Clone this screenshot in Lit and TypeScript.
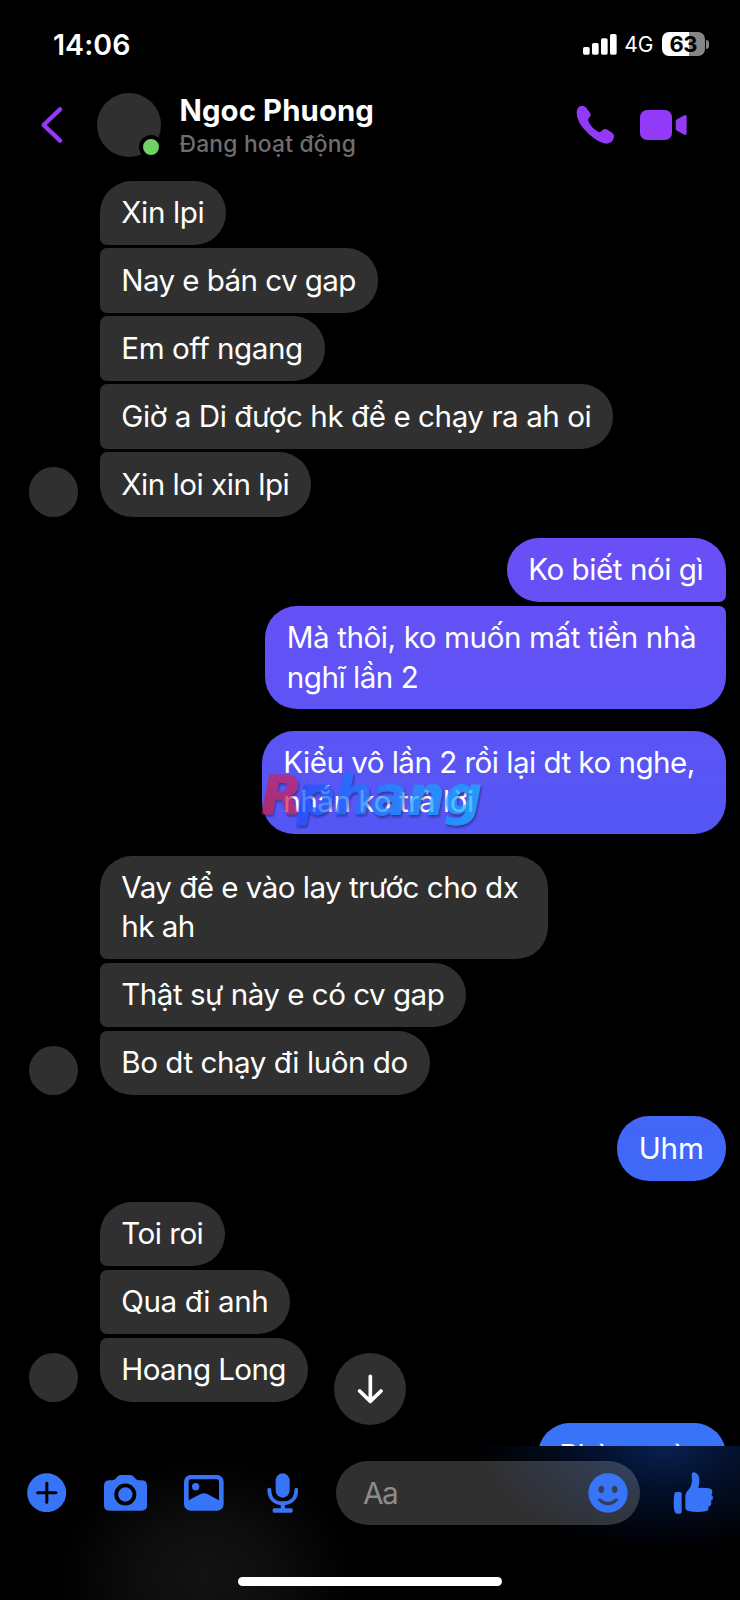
import { LitElement, html, css, svg } from "lit";
import { customElement, property } from "lit/decorators.js";
import { classMap } from "lit/directives/class-map.js";

/** A line of text and the width it is set to. */
type Line = [text: string, width: number];

interface Message {
  lines: Line[];
  width: number;
  joinTop?: boolean;
  joinBottom?: boolean;
}

interface Group {
  mine: boolean;
  messages: Message[];
}

const GROUPS: Group[] = [
  {
    mine: false,
    messages: [
      { lines: [["Xin lpi", 83]], width: 126, joinBottom: true },
      { lines: [["Nay e bán cv gap", 234.5]], width: 278, joinTop: true, joinBottom: true },
      { lines: [["Em off ngang", 181.5]], width: 225, joinTop: true, joinBottom: true },
      { lines: [["Giờ a Di được hk để e chạy ra ah oi", 470]], width: 513, joinTop: true, joinBottom: true },
      { lines: [["Xin loi xin lpi", 168]], width: 211, joinTop: true },
    ],
  },
  {
    mine: true,
    messages: [
      { lines: [["Ko biết nói gì", 175]], width: 219, joinBottom: true },
      { lines: [["Mà thôi, ko muốn mất tiền nhà", 409.5], ["nghĩ lần 2", 131.5]], width: 460.5, joinTop: true },
    ],
  },
  {
    mine: true,
    messages: [{ lines: [["Kiểu vô lần 2 rồi lại dt ko nghe,", 411.5], ["nhắn ko trả lời", 190.5]], width: 464 }],
  },
  {
    mine: false,
    messages: [
      { lines: [["Vay để e vào lay trước cho dx", 397], ["hk ah", 73.5]], width: 448, joinBottom: true },
      { lines: [["Thật sự này e có cv gap", 323]], width: 366, joinTop: true, joinBottom: true },
      { lines: [["Bo dt chạy đi luôn do", 286.5]], width: 330, joinTop: true },
    ],
  },
  { mine: true, messages: [{ lines: [["Uhm", 65]], width: 108.5 }] },
  {
    mine: false,
    messages: [
      { lines: [["Toi roi", 82]], width: 125, joinBottom: true },
      { lines: [["Qua đi anh", 147]], width: 190, joinTop: true, joinBottom: true },
      { lines: [["Hoang Long", 164.5]], width: 208, joinTop: true },
    ],
  },
  { mine: true, messages: [{ lines: [["Phòng nào", 145]], width: 188 }] },
];

/** Text tracked so that its advance equals the given width. */
@customElement("fit-text")
class FitText extends LitElement {
  @property() text = "";
  @property({ type: Number }) width = 0;

  static styles = css`
    :host { display: block; white-space: pre; }
    .run { display: inline-block; }
  `;

  render() {
    return html`<span class="run">${this.text}</span>`;
  }

  updated() {
    const run = this.renderRoot.querySelector(".run") as HTMLElement;
    run.style.letterSpacing = "0px";
    const natural = run.getBoundingClientRect().width;
    run.style.letterSpacing = `${(this.width - natural) / [...this.text].length}px`;
  }
}

@customElement("chat-bubble")
class ChatBubble extends LitElement {
  @property({ attribute: false }) message!: Message;
  @property({ type: Boolean }) mine = false;

  static styles = css`
    :host { display: block; }
    .bubble {
      box-sizing: border-box;
      padding: 12.5px 21.5px;
      border-radius: 32px;
      background: #303030;
      color: #fff;
      font-size: 29.6px;
      line-height: 39.3px;
    }
    .mine {
      background: linear-gradient(#6a4ff6 540px, #5457f4 830px, #4168f8 1150px, #3874f7 1440px) fixed;
    }
    .theirs.top { border-top-left-radius: 7px; }
    .theirs.bottom { border-bottom-left-radius: 7px; }
    .mine.top { border-top-right-radius: 7px; }
    .mine.bottom { border-bottom-right-radius: 7px; }
  `;

  render() {
    const m = this.message;
    const classes = {
      bubble: true,
      mine: this.mine,
      theirs: !this.mine,
      top: !!m.joinTop,
      bottom: !!m.joinBottom,
    };
    return html`<div class=${classMap(classes)} style="width:${m.width}px">
      ${m.lines.map(([t, w]) => html`<fit-text .text=${t} .width=${w}></fit-text>`)}
    </div>`;
  }
}

const icon = (viewBox: string, width: number, height: number, body: unknown) =>
  html`<svg class="icon" width=${width} height=${height} viewBox=${viewBox}>${body}</svg>`;

const backIcon = icon("0 0 66 108", 22, 36, svg`<path d="M57 7L8 54L57 101" fill="none" stroke="#9339f8" stroke-width="13" stroke-linecap="round" stroke-linejoin="round"/>`);

const phoneIcon = icon("108 316 117 117", 39, 39, svg`<path fill="#9339f8" d="M110 337Q112 318 127 318Q134 318 139 325L150 339Q155 345 149 352Q142 359 145 365Q155 387 176 397Q181 399 188 391Q194 386 200 389L214 398Q223 403 222 412Q218 431 200 432Q178 432 147 404Q108 368 110 337Z"/>`);

const videoIcon = icon("300 330 141 90", 47, 30, svg`<rect x="300" y="330" width="96" height="90" rx="21" fill="#9339f8"/><path fill="#9339f8" d="M411 358L433 346Q440 343 440 350V400Q440 407 433 404L411 392Q407 390 407 386V364Q407 360 411 358Z"/>`);

const signalIcon = icon("130 101 101 63", 33.67, 21, svg`<g fill="#fff"><rect x="130" y="140" width="20" height="23" rx="5"/><rect x="157" y="128" width="20" height="35" rx="5"/><rect x="184" y="114" width="20" height="49" rx="5"/><rect x="211" y="101" width="20" height="62" rx="5"/></g>`);

const plusIcon = icon("80 159 118 118", 39.33, 39.33, svg`<circle cx="139" cy="218" r="58.5" fill="#3874f7"/><path d="M112 218H167M139.500 190V247" stroke="#000" stroke-width="9" stroke-linecap="round"/>`);

const cameraIcon = icon("311 165 129 108", 43, 36, svg`<path fill="#3874f7" d="M311 197Q311 181 327 181H335Q341 181 345 176L352 169Q356 165 362 165H388Q395 165 399 169L406 176Q410 181 416 181H424Q440 181 440 197V256Q440 272 424 272H327Q311 272 311 256Z"/><circle cx="375" cy="223.500" r="33" fill="#000"/><circle cx="375" cy="223.500" r="21.500" fill="#3874f7"/>`);

const photoIcon = icon("552 165 119 108", 39.67, 36, svg`<rect x="552" y="165" width="119" height="107" rx="20" fill="#3874f7"/><path fill="#020202" d="M566 184Q566 178 572 178H651Q657 178 657 184V241L622 222Q612 217 601 222L566 241Z"/><circle cx="587" cy="200" r="11" fill="#3874f7"/>`);

const micIcon = icon("800 158 95 120", 31.67, 40, svg`<rect x="826" y="159" width="42" height="73" rx="21" fill="#3874f7"/><path d="M807 208C807 235 824 249 847.500 249S888 235 888 208" fill="none" stroke="#3874f7" stroke-width="12" stroke-linecap="round"/><path fill="#3874f7" d="M841 250H854V264H873Q877 264 877 268V273Q877 277 873 277H821Q817 277 817 273V268Q817 264 821 264H841Z"/>`);

const smileIcon = icon("803 398 120 120", 40, 40, svg`<circle cx="863" cy="458" r="59" fill="#3874f7"/><g fill="#333f55"><ellipse cx="843" cy="447" rx="8.500" ry="11"/><ellipse cx="883" cy="447" rx="8.500" ry="11"/></g><path d="M838 479Q863 501 888 479" fill="none" stroke="#333f55" stroke-width="9" stroke-linecap="round"/>`);

const likeIcon = icon("1060 390 123 132", 41, 44, svg`<g fill="#3874f7"><path d="M1070 453H1081Q1086 453 1086 458V513Q1086 518 1081 518H1072Q1067 518 1065 512Q1062 503 1062 486Q1062 469 1064 459Q1065 453 1070 453Z"/><path d="M1116 400Q1117 393 1124 394Q1141 399 1139 422Q1138 432 1136 441Q1150 439 1168 442Q1178 444 1178 452Q1178 458 1175 461Q1181 465 1180 471Q1179 478 1173 480Q1177 485 1174 491Q1171 495 1166 497Q1169 508 1158 511Q1130 515 1106 510Q1097 508 1097 499V464Q1097 457 1103 450Q1117 437 1117 417Z"/></g>`);

const downIcon = icon("110 102 80 90", 26.67, 30, svg`<path d="M150 109V184M118 153L150 184L182 153" fill="none" stroke="#fff" stroke-width="11" stroke-linecap="round" stroke-linejoin="round"/>`);

@customElement("app-root")
class AppRoot extends LitElement {
  static styles = css`
    :host {
      display: flex;
      flex-direction: column;
      width: 740px;
      height: 1600px;
      overflow: hidden;
      background: #000;
      color: #fff;
      font-family: Inter, "Liberation Sans", sans-serif;
    }
    .icon { display: block; flex: none; }
    .status {
      display: flex;
      align-items: center;
      height: 88px;
      box-sizing: border-box;
      padding: 0 30.800px 0 53px;
    }
    .time { flex: 1; padding-top: 1px; font-size: 28.500px; font-weight: 600; line-height: 34px; }
    .net { margin: 2px 8px 0 7.500px; width: 29.500px; font-size: 21px; line-height: 24px; }
    .battery {
      display: grid;
      place-items: center;
      width: 43px;
      height: 24px;
      border-radius: 7px;
      background: linear-gradient(90deg, #fff 27px, #868686 27px);
      color: #000;
      font-size: 22px;
      line-height: 24px;
      font-weight: 700;
    }
    .nub { width: 3px; height: 9px; margin-left: 1.500px; border-radius: 0 5px 5px 0; background: #868686; }
    .head {
      display: flex;
      align-items: center;
      height: 73px;
      box-sizing: border-box;
      padding: 0 53px 0 41px;
    }
    .face {
      position: relative;
      width: 64px;
      height: 64px;
      margin: 0 19px 0 33.500px;
      border-radius: 50%;
      background: #303030;
    }
    .online {
      position: absolute;
      right: -2px;
      bottom: -2px;
      width: 16px;
      height: 16px;
      border: 4px solid #000;
      border-radius: 50%;
      background: #70d264;
    }
    .who { flex: 1; padding-top: 3px; }
    .name { font-size: 29.300px; font-weight: 700; line-height: 34px; }
    .state { font-size: 22.800px; font-weight: 500; line-height: 28px; margin-top: 2px; color: #6e6e6e; }
    .call { margin-right: 25.500px; }
    .chat {
      position: relative;
      display: flex;
      flex-direction: column;
      gap: 21.250px;
      height: 1285px;
      flex: none;
      box-sizing: border-box;
      padding: 19.500px 14.300px 0 28.600px;
      overflow: hidden;
    }
    .group { display: flex; flex: none; align-items: flex-end; gap: 21.700px; }
    .group.mine { justify-content: flex-end; }
    .stack { display: flex; flex-direction: column; gap: 3.660px; }
    .mine .stack { align-items: flex-end; }
    .avatar { width: 49.500px; height: 49.500px; border-radius: 50%; background: #303030; }
    .jump {
      position: absolute;
      left: 334px;
      top: 1192px;
      display: grid;
      place-items: center;
      width: 72px;
      height: 72px;
      border-radius: 50%;
      background: #303030;
    }
    .mark { position: absolute; left: 255px; top: 601px; opacity: 0.72; }
    .mark text { font: italic bold 53px "DejaVu Sans", sans-serif; }
    .composer {
      flex: 1;
      display: flex;
      flex-direction: column;
      justify-content: space-between;
      align-items: center;
      background:
        radial-gradient(ellipse 190px 105px at 665px 0, #08204f, rgba(4, 20, 54, 0.7) 45%, transparent),
        radial-gradient(ellipse 150px 120px at 205px 130px, #131313, #0d0d0d 45%, transparent),
        #000;
    }
    .tools {
      display: flex;
      align-items: center;
      width: 740px;
      box-sizing: border-box;
      padding: 14.700px 26px 0 26.800px;
    }
    .camera { margin-left: 37.500px; }
    .photo { margin-left: 37.500px; }
    .mic { margin-left: 42.800px; }
    .field {
      display: flex;
      align-items: center;
      justify-content: space-between;
      width: 304px;
      height: 64px;
      box-sizing: border-box;
      margin-left: 37.500px;
      padding: 0 12px 0 27.200px;
      border-radius: 32px;
      background: rgba(255, 255, 255, 0.19);
      color: #8c8c8c;
      font-size: 29.800px;
    }
    .like { margin-left: 33px; }
    .home { width: 264.500px; height: 9px; margin-bottom: 14px; border-radius: 5px; background: #fff; }
  `;

  render() {
    return html`
      <div class="status">
        <div class="time"><fit-text .text=${"14:06"} .width=${77.5}></fit-text></div>
        ${signalIcon}
        <div class="net"><fit-text .text=${"4G"} .width=${29}></fit-text></div>
        <div class="battery"><fit-text .text=${"63"} .width=${27.5}></fit-text></div>
        <div class="nub"></div>
      </div>
      <div class="head">
        ${backIcon}
        <div class="face"><div class="online"></div></div>
        <div class="who">
          <fit-text class="name" .text=${"Ngoc Phuong"} .width=${194.5}></fit-text>
          <fit-text class="state" .text=${"Đang hoạt động"} .width=${176.5}></fit-text>
        </div>
        <div class="call">${phoneIcon}</div>
        ${videoIcon}
      </div>
      <div class="chat">
        ${GROUPS.map(
          (g) => html`<div class=${classMap({ group: true, mine: g.mine })}>
            ${g.mine ? "" : html`<div class="avatar"></div>`}
            <div class="stack">
              ${g.messages.map((m) => html`<chat-bubble .message=${m} .mine=${g.mine}></chat-bubble>`)}
            </div>
          </div>`
        )}
        <svg class="mark" width="236" height="75" viewBox="255 761 236 75">
          <defs>
            <linearGradient id="red" x1="0" y1="1" x2="1" y2="0"><stop offset="0" stop-color="#d01c34"/><stop offset="1" stop-color="#c82672"/></linearGradient>
            <linearGradient id="blue"><stop offset="0" stop-color="#1f4dfa"/><stop offset="0.5" stop-color="#1f8cff"/><stop offset="1" stop-color="#14b2ff"/></linearGradient>
            <filter id="shade"><feDropShadow dx="1" dy="2" stdDeviation="0.8" flood-color="#101040" flood-opacity="0.7"/></filter>
          </defs>
          <g filter="url(#shade)" stroke-width="1" stroke-linejoin="round">
            <text x="261" y="813" textLength="41" lengthAdjust="spacingAndGlyphs" fill="url(#red)" stroke="url(#red)">R</text>
            <text x="297" y="813" textLength="185" lengthAdjust="spacingAndGlyphs" fill="url(#blue)" stroke="url(#blue)">phang</text>
          </g>
        </svg>
        <div class="jump">${downIcon}</div>
      </div>
      <div class="composer">
        <div class="tools">
          ${plusIcon}
          <div class="camera">${cameraIcon}</div>
          <div class="photo">${photoIcon}</div>
          <div class="mic">${micIcon}</div>
          <div class="field"><fit-text .text=${"Aa"} .width=${34.5}></fit-text>${smileIcon}</div>
          <div class="like">${likeIcon}</div>
        </div>
        <div class="home"></div>
      </div>
    `;
  }
}
